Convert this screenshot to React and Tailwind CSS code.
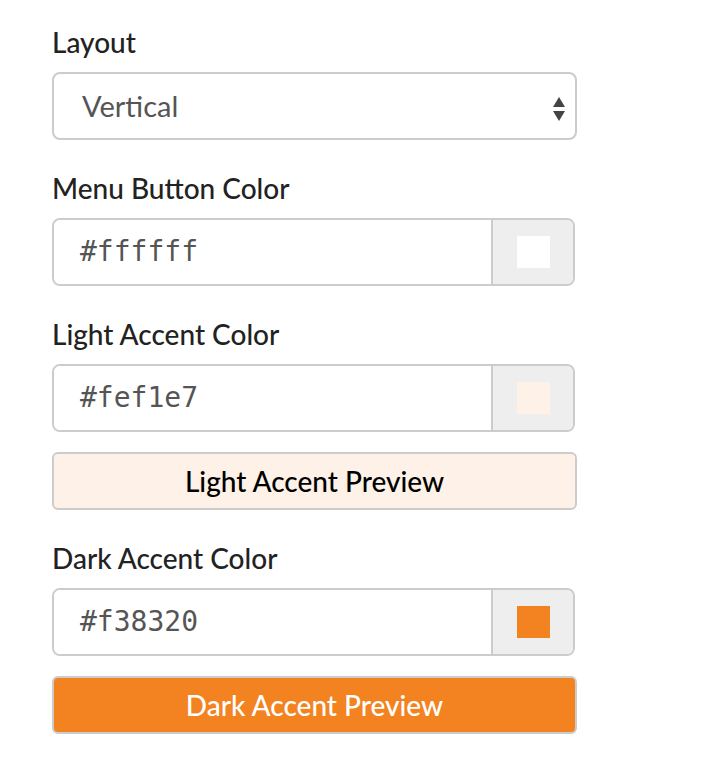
import React from "react";

function Label({ children }) {
  return (
    <div className="text-[28px] leading-[36px] text-[#222] font-medium mb-[12px]">
      {children}
    </div>
  );
}

function ColorInput({ value, swatch }) {
  return (
    <div className="flex w-[523px] h-[68px] border-2 border-[#ccc] rounded-[8px] overflow-hidden">
      <div className="flex-1 flex items-center pl-[26px] bg-white font-['DejaVu_Sans_Mono',monospace] text-[28px] text-[#555]">
        {value}
      </div>
      <div className="w-[82px] flex items-center justify-center bg-[#eee] border-l-2 border-[#ccc]">
        <div className="w-[33px] h-[32px]" style={{ backgroundColor: swatch }} />
      </div>
    </div>
  );
}

export default function App() {
  return (
    <div className="min-h-[764px] bg-white pl-[52px] pt-[24px] font-['Lato',sans-serif]">
      <Label>Layout</Label>
      <div className="relative w-[525px] h-[68px] border-2 border-[#ccc] rounded-[8px] bg-white flex items-center pl-[28px]">
        <span className="text-[29px] text-[#555]">Vertical</span>
        <svg className="absolute right-[9px] top-[22px]" width="14" height="26" viewBox="0 0 14 26">
          <path d="M7 1 L13 11 L1 11 Z" fill="#444" />
          <path d="M1 15 L13 15 L7 25 Z" fill="#444" />
        </svg>
      </div>

      <div className="mt-[30px]">
        <Label>Menu Button Color</Label>
        <ColorInput value="#ffffff" swatch="#ffffff" />
      </div>

      <div className="mt-[30px]">
        <Label>Light Accent Color</Label>
        <ColorInput value="#fef1e7" swatch="#fef1e7" />
        <div className="mt-[20px] w-[525px] h-[58px] border-2 border-[#ccc] rounded-[6px] bg-[#fef1e7] flex items-center justify-center text-[28px] font-medium text-black">
          Light Accent Preview
        </div>
      </div>

      <div className="mt-[30px]">
        <Label>Dark Accent Color</Label>
        <ColorInput value="#f38320" swatch="#f38320" />
        <div className="mt-[20px] w-[525px] h-[58px] border-2 border-[#ccc] rounded-[6px] bg-[#f38320] flex items-center justify-center text-[28px] font-medium text-white">
          Dark Accent Preview
        </div>
      </div>
    </div>
  );
}
